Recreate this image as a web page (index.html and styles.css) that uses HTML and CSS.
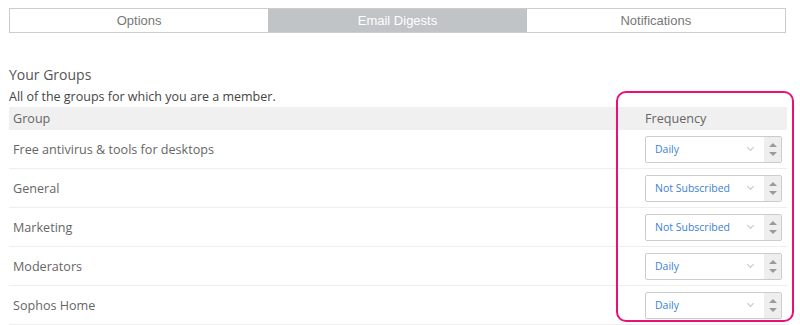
FILE: index.html
```html
<!DOCTYPE html>
<html>
  <head>
    <meta charset="UTF-8">
    <title>Email Digests</title>
    <link rel="stylesheet" href="styles.css">
  </head>
  <body>
    <div class="page">
      <div class="tabs">
        <div class="tab">Options</div>
        <div class="tab active">Email Digests</div>
        <div class="tab">Notifications</div>
      </div>

      <h3 class="title">Your Groups</h3>
      <p class="desc">All of the groups for which you are a member.</p>

      <div class="groups">
        <div class="row head">
          <div class="name">Group</div>
          <div class="freq">Frequency</div>
        </div>
        <div class="row">
          <div class="name">Free antivirus &amp; tools for desktops</div>
          <div class="freq"><div class="picker"><span class="val">Daily</span><span class="chev"></span><span class="spin"><i class="up"></i><i class="down"></i></span></div></div>
        </div>
        <div class="row">
          <div class="name">General</div>
          <div class="freq"><div class="picker"><span class="val">Not Subscribed</span><span class="chev"></span><span class="spin"><i class="up"></i><i class="down"></i></span></div></div>
        </div>
        <div class="row">
          <div class="name">Marketing</div>
          <div class="freq"><div class="picker"><span class="val">Not Subscribed</span><span class="chev"></span><span class="spin"><i class="up"></i><i class="down"></i></span></div></div>
        </div>
        <div class="row">
          <div class="name">Moderators</div>
          <div class="freq"><div class="picker"><span class="val">Daily</span><span class="chev"></span><span class="spin"><i class="up"></i><i class="down"></i></span></div></div>
        </div>
        <div class="row">
          <div class="name">Sophos Home</div>
          <div class="freq"><div class="picker"><span class="val">Daily</span><span class="chev"></span><span class="spin"><i class="up"></i><i class="down"></i></span></div></div>
        </div>

        <!-- highlight around the frequency column -->
        <div class="highlight"></div>
      </div>
    </div>
  </body>
</html>
```

FILE: styles.css
```css
body {
  margin: 0;
  background: #fff;
  font-family: "Open Sans", Arial, sans-serif;
  color: #666;
}
.page {
  padding: 8px 14px 0 9px;
}
.tabs {
  display: flex;
  border: 1px solid #ccc;
  height: 23px;
}
.tab {
  flex: 1;
  text-align: center;
  line-height: 24px;
  font-family: "Liberation Sans Narrow", "Liberation Sans", sans-serif;
  font-size: 13px;
  color: #777;
}
.tab.active {
  background-color: #c0c4c7;
  color: #fff;
}
.title {
  margin: 33px 0 0;
  font-size: 14px;
  font-weight: normal;
  color: #555;
  line-height: 18px;
}
.desc {
  margin: 4px 0 0;
  font-size: 12.5px;
  color: #444;
  line-height: 17px;
}
.groups {
  position: relative;
  margin-top: 2px;
  margin-right: -1px;
}
.row {
  display: flex;
  align-items: center;
  height: 38px;
  border-bottom: 1px solid #eee;
  font-size: 12.6px;
}
.row.head {
  height: 23px;
  background-color: #f0f0f0;
  border-bottom: none;
}
.name {
  flex: 1;
  padding-left: 4px;
}
.freq {
  width: 142px;
}
.picker {
  display: flex;
  align-items: center;
  width: 135px;
  height: 25px;
  border: 1px solid #ccc;
  border-radius: 2px;
  background: #fff;
}
.val {
  flex: 1;
  padding-left: 9px;
  font-size: 10.5px;
  color: #3b7fd4;
}
.chev {
  width: 4px;
  height: 4px;
  border-right: 1px solid #c4c4c4;
  border-bottom: 1px solid #c4c4c4;
  transform: rotate(45deg);
  margin: 0 11px 3px 0;
}
.spin {
  display: flex;
  flex-direction: column;
  justify-content: center;
  align-items: center;
  gap: 5px;
  width: 17px;
  height: 100%;
  background: #eee;
}
.spin i {
  width: 0;
  height: 0;
  border-left: 4px solid transparent;
  border-right: 4px solid transparent;
}
.spin .up {
  border-bottom: 4px solid #9a9a9a;
}
.spin .down {
  border-top: 4px solid #9a9a9a;
}
.highlight {
  position: absolute;
  left: 607px;
  top: -16px;
  width: 174px;
  height: 227px;
  border: 2px solid #e8107a;
  border-radius: 10px;
}
```
